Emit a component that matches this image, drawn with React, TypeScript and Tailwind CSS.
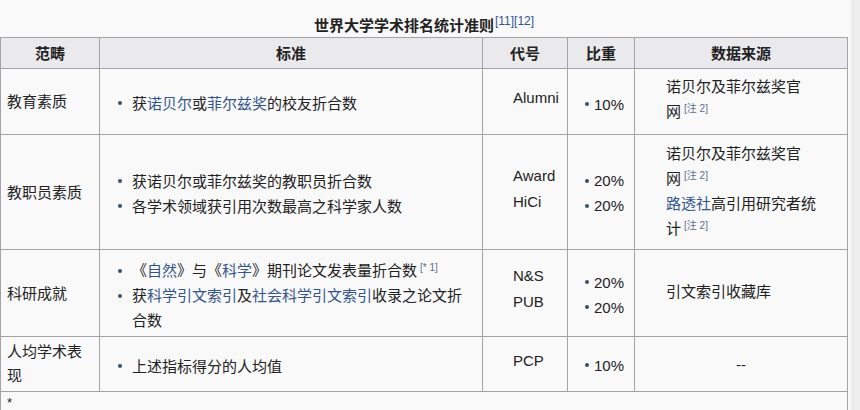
import type { ReactNode } from "react"

const cell = "border-r border-b border-[#a3a3a7] flex flex-col justify-center"
const head = "border-r border-b border-[#a3a3a7] bg-[#eaeaed] flex items-center justify-center font-bold"
const link = "text-[#34558b]"

function Dot() {
  return <span className="inline-block h-[4px] w-[4px] shrink-0 rounded-full bg-[#3a5069]" />
}

function Note({ children }: { children: ReactNode }) {
  return <sup className="ml-[3px] text-[10px] text-[#5b6f8c]">{children}</sup>
}

// bulleted line for the criteria column
function Item({ children }: { children: ReactNode }) {
  return (
    <li className="flex">
      <span className="flex h-[25px] items-center">
        <Dot />
      </span>
      <span className="ml-[10px]">{children}</span>
    </li>
  )
}

function Weight({ values }: { values: string[] }) {
  return (
    <ul className="pl-[17px]">
      {values.map((v, i) => (
        <li key={i} className="flex items-center gap-[5px]">
          <Dot />
          <span>{v}</span>
        </li>
      ))}
    </ul>
  )
}

export default function App() {
  return (
    <div
      className="flex h-[410px] w-[860px] overflow-hidden bg-[#f9f9fa] text-[15px] leading-[25px] text-[#222]"
      style={{ fontFamily: '"Liberation Sans", "Noto Sans CJK SC", sans-serif' }}
    >
      <div className="w-[848px] shrink-0">
        {/* Caption */}
        <div className="flex h-[37px] justify-center pt-[13px] font-bold">
          <span>
            世界大学学术排名统计准则
            <sup className={`ml-[1px] text-[12px] font-normal ${link}`}>[11][12]</sup>
          </span>
        </div>

        <div className="grid grid-cols-[99px_383px_85px_67px_213px] grid-rows-[31px_66px_115px_87px_55px_30px] border-l border-t border-[#a3a3a7]">
          {/* Header */}
          <div className={head}>范畴</div>
          <div className={head}>标准</div>
          <div className={head}>代号</div>
          <div className={head}>比重</div>
          <div className={head}>数据来源</div>

          {/* 教育素质 */}
          <div className={`${cell} pl-[6px]`}>教育素质</div>
          <div className={`${cell} pl-[18px] pt-[3px]`}>
            <ul>
              <Item>
                获<span className={link}>诺贝尔</span>或<span className={link}>菲尔兹奖</span>的校友折合数
              </Item>
            </ul>
          </div>
          <div className={`${cell} pl-[30px] pb-[8px]`}>Alumni</div>
          <div className={`${cell} pt-[5px]`}>
            <Weight values={["10%"]} />
          </div>
          <div className={`${cell} pl-[31px] pb-[5px]`}>
            <div>诺贝尔及菲尔兹奖官</div>
            <div>
              网<Note>[注 2]</Note>
            </div>
          </div>

          {/* 教职员素质 */}
          <div className={`${cell} pl-[6px]`}>教职员素质</div>
          <div className={`${cell} pl-[18px] pt-[3px]`}>
            <ul>
              <Item>获诺贝尔或菲尔兹奖的教职员折合数</Item>
              <Item>各学术领域获引用次数最高之科学家人数</Item>
            </ul>
          </div>
          <div className={`${cell} pl-[30px] pb-[6px] leading-[26px]`}>
            <div>Award</div>
            <div>HiCi</div>
          </div>
          <div className={`${cell} pt-[2px]`}>
            <Weight values={["20%", "20%"]} />
          </div>
          <div className={`${cell} pl-[31px] pb-[3px]`}>
            <div>诺贝尔及菲尔兹奖官</div>
            <div>
              网<Note>[注 2]</Note>
            </div>
            <div>
              <span className={link}>路透社</span>高引用研究者统
            </div>
            <div>
              计<Note>[注 2]</Note>
            </div>
          </div>

          {/* 科研成就 */}
          <div className={`${cell} pl-[6px]`}>科研成就</div>
          <div className={`${cell} pl-[18px] pt-[5px]`}>
            <ul>
              <Item>
                《<span className={link}>自然</span>》与《<span className={link}>科学</span>》期刊论文发表量折合数
                <Note>[* 1]</Note>
              </Item>
              <Item>
                获<span className={link}>科学引文索引</span>及<span className={link}>社会科学引文索引</span>收录之论文折
                <br />
                合数
              </Item>
            </ul>
          </div>
          <div className={`${cell} pl-[30px] pb-[8px] leading-[26px]`}>
            <div>N&amp;S</div>
            <div>PUB</div>
          </div>
          <div className={`${cell} pt-[3px]`}>
            <Weight values={["20%", "20%"]} />
          </div>
          <div className={`${cell} pl-[31px] pb-[4px]`}>引文索引收藏库</div>

          {/* 人均学术表现 */}
          <div className={`${cell} pl-[6px] leading-[24px]`}>
            <div>人均学术表</div>
            <div>现</div>
          </div>
          <div className={`${cell} pl-[18px] pt-[4px]`}>
            <ul>
              <Item>上述指标得分的人均值</Item>
            </ul>
          </div>
          <div className={`${cell} pl-[30px] pb-[8px]`}>PCP</div>
          <div className={`${cell} pt-[2px]`}>
            <Weight values={["10%"]} />
          </div>
          <div className={`${cell} items-center`}>--</div>

          {/* Footnote row */}
          <div className="col-span-5 border-r border-[#a3a3a7] pl-[6px] pt-[3px] text-[13px] leading-[16px]">*</div>
        </div>
      </div>
      <div className="ml-[3px] flex-1 bg-[#ededee]" />
    </div>
  )
}
